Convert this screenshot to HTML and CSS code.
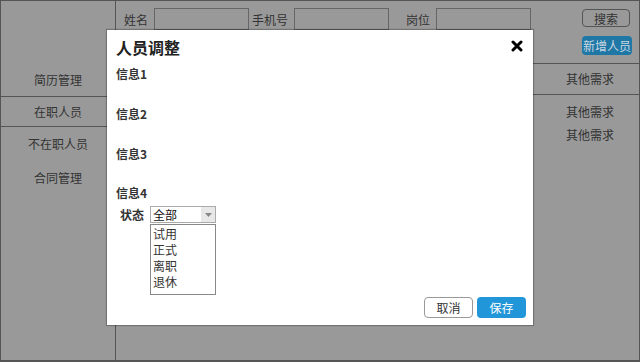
FILE: index.html
```html
<!DOCTYPE html>
<html lang="zh-CN">
<head>
    <meta charset="UTF-8">
    <meta name="viewport" content="width=device-width, initial-scale=1.0">
    <title>人员管理</title>
    <link rel="stylesheet" href="styles.css">
</head>
<body>
    <div class="app">
        <div class="sidebar">
            <div class="nav-item nav-first">简历管理</div>
            <div class="nav-item nav-second">在职人员</div>
            <div class="nav-item">不在职人员</div>
            <div class="nav-item">合同管理</div>
        </div>

        <div class="main">
            <div class="search-bar">
                <div class="fields">
                    <label class="field-label w-name">姓名</label>
                    <input class="field-input" type="text">
                    <label class="field-label w-phone">手机号</label>
                    <input class="field-input" type="text">
                    <label class="field-label w-post">岗位</label>
                    <input class="field-input" type="text">
                </div>
                <div class="actions">
                    <button class="btn-search">搜索</button>
                    <button class="btn-add">新增人员</button>
                </div>
            </div>

            <div class="table">
                <div class="table-row table-head">
                    <div class="cell-fill"></div>
                    <div class="cell">其他需求</div>
                </div>
                <div class="table-body">
                    <div class="table-row">
                        <div class="cell-fill"></div>
                        <div class="cell">其他需求</div>
                    </div>
                    <div class="table-row">
                        <div class="cell-fill"></div>
                        <div class="cell">其他需求</div>
                    </div>
                </div>
            </div>
        </div>

        <!-- 弹窗 -->
        <div class="modal">
            <div class="modal-header">
                <h2 class="modal-title">人员调整</h2>
                <span class="modal-close">
                    <svg width="12" height="12" viewBox="0 0 12 12">
                        <path d="M2 2 L10 10 M10 2 L2 10" stroke="#000" stroke-width="3" stroke-linecap="round"/>
                    </svg>
                </span>
            </div>

            <div class="modal-body">
                <div class="info-block">信息1</div>
                <div class="info-block">信息2</div>
                <div class="info-block">信息3</div>
                <div class="info-block info-last">信息4</div>

                <div class="status-row">
                    <span class="status-label">状态</span>
                    <div class="dropdown">
                        <div class="dropdown-value">
                            <span>全部</span>
                            <span class="dropdown-arrow">
                                <svg width="7" height="4" viewBox="0 0 7 4">
                                    <path d="M0 0 L7 0 L3.5 4 Z" fill="#888"/>
                                </svg>
                            </span>
                        </div>
                        <ul class="dropdown-list">
                            <li>试用</li>
                            <li>正式</li>
                            <li>离职</li>
                            <li>退休</li>
                        </ul>
                    </div>
                </div>
            </div>

            <div class="modal-footer">
                <button class="btn-cancel">取消</button>
                <button class="btn-save">保存</button>
            </div>
        </div>
    </div>
</body>
</html>
```

FILE: styles.css
```css
body {
    margin: 0;
    font-family: "Noto Sans CJK SC", "Liberation Sans", sans-serif;
    font-size: 12px;
    color: #333;
}
.app {
    position: relative;
    display: flex;
    width: 640px;
    height: 362px;
    box-sizing: border-box;
    border: 1px solid #555;
    border-bottom-width: 2px;
    background-color: #999;
}
.sidebar {
    width: 114px;
    padding-top: 62px;
    border-right: 1px solid #555;
}
.nav-item {
    height: 34px;
    line-height: 34px;
    text-align: center;
}
.nav-first {
    height: 33px;
    line-height: 33px;
    border-bottom: 1px solid #555;
}
.nav-second {
    height: 29px;
    line-height: 29px;
    border-bottom: 1px solid #555;
}
.main {
    flex: 1;
    display: flex;
    flex-direction: column;
}
.search-bar {
    display: flex;
    justify-content: space-between;
    height: 62px;
}
.fields {
    display: flex;
    align-items: center;
    height: 22px;
    margin-top: 7px;
}
.field-label {
    box-sizing: border-box;
    padding-right: 6px;
    text-align: right;
}
.w-name { width: 38px; }
.w-phone { width: 45px; }
.w-post { width: 47px; }
.field-input {
    width: 95px;
    height: 22px;
    box-sizing: border-box;
    border: 1px solid #666;
    background-color: #999;
    margin: 0;
}
.actions {
    display: flex;
    flex-direction: column;
    align-items: flex-start;
    width: 57px;
    padding-top: 8px;
}
.actions button {
    font-family: inherit;
    font-size: 12px;
    padding: 0;
    cursor: pointer;
}
.btn-search {
    width: 48px;
    height: 18px;
    border: 1px solid #555;
    border-radius: 4px;
    background-color: #999;
    color: #333;
}
.btn-add {
    width: 50px;
    height: 19px;
    margin-top: 9px;
    border: none;
    border-radius: 4px;
    background-color: #1f77a6;
    color: #c9d8e2;
}
.table-row {
    display: flex;
}
.table-head {
    height: 30px;
    line-height: 30px;
    border-top: 1px solid #555;
    border-bottom: 1px solid #555;
}
.table-body {
    padding-top: 5px;
}
.table-body .table-row {
    height: 23px;
    line-height: 23px;
}
.cell-fill {
    flex: 1;
}
.cell {
    width: 98px;
    text-align: center;
}
.modal {
    position: absolute;
    left: 106px;
    top: 29px;
    width: 426px;
    height: 295px;
    box-sizing: border-box;
    padding: 0 7px 7px 9px;
    display: flex;
    flex-direction: column;
    background-color: #fff;
    box-shadow: 0 0 1px 1px rgba(0, 0, 0, 0.25);
}
.modal-header {
    display: flex;
    justify-content: space-between;
    align-items: center;
    height: 30px;
    margin-top: 2px;
}
.modal-title {
    margin: 0;
    font-size: 16px;
    font-weight: bold;
    color: #222;
}
.modal-close {
    display: flex;
    margin-right: 3px;
    margin-top: -3px;
}
.modal-body {
    flex: 1;
}
.info-block {
    height: 40px;
    padding-top: 4px;
    box-sizing: border-box;
    line-height: 16px;
    font-weight: bold;
    color: #333;
}
.info-last {
    height: 24px;
    padding-top: 3px;
}
.status-row {
    display: flex;
    align-items: flex-start;
    padding-left: 3px;
}
.status-label {
    width: 31px;
    box-sizing: border-box;
    padding-right: 6px;
    text-align: right;
    white-space: nowrap;
    line-height: 17px;
    font-weight: bold;
}
.dropdown {
    width: 66px;
}
.dropdown-value {
    display: flex;
    justify-content: space-between;
    height: 17px;
    line-height: 16px;
    box-sizing: border-box;
    border: 1px solid #aaa;
    padding-left: 2px;
    color: #111;
}
.dropdown-arrow {
    display: flex;
    align-items: center;
    justify-content: center;
    width: 14px;
    background-color: #e8e8e8;
}
.dropdown-list {
    list-style: none;
    margin: 1px 0 0;
    padding: 1px 0 4px 2px;
    border: 1px solid #888;
    line-height: 16px;
    color: #333;
}
.modal-footer {
    display: flex;
    justify-content: flex-end;
    gap: 4px;
}
.modal-footer button {
    width: 49px;
    height: 21px;
    padding: 0;
    font-family: inherit;
    font-size: 12px;
    border-radius: 4px;
    cursor: pointer;
}
.btn-cancel {
    border: 1px solid #999;
    background-color: #fff;
    color: #333;
}
.btn-save {
    border: none;
    background-color: #2196d8;
    color: #fff;
}
```
